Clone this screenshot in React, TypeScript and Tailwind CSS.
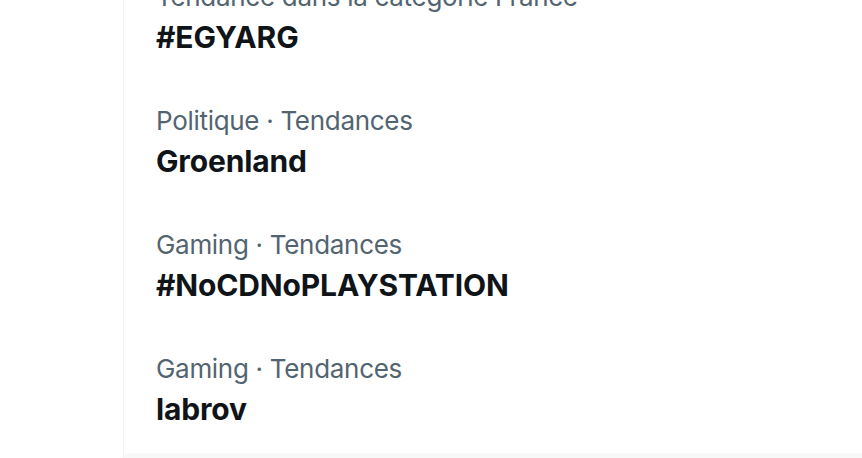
const trends = [
  { context: "Tendance dans la catégorie France", title: "#EGYARG" },
  { context: "Politique · Tendances", title: "Groenland" },
  { context: "Gaming · Tendances", title: "#NoCDNoPLAYSTATION" },
  { context: "Gaming · Tendances", title: "labrov" },
];

const TrendRow = ({ context, title }: { context: string; title: string }) => {
  return (
    <div className="px-8 py-6">
      <div className="text-[26px] leading-[32px] tracking-[-0.3px] text-[#536471]">
        {context}
      </div>
      <div className="mt-1 text-[30px] leading-[40px] tracking-[-0.15px] font-bold text-[#0f1419]">
        {title}
      </div>
    </div>
  );
};

export default function App() {
  return (
    <div
      className="flex w-[862px] h-[458px] overflow-hidden bg-white"
      style={{ fontFamily: "Inter, 'Noto Sans', sans-serif" }}
    >
      <div className="w-[123px] shrink-0" />
      <div className="flex flex-1 flex-col border-l border-[#eff3f4]">
        <div className="-mt-[43px]">
          {trends.map((t, i) => (
            <TrendRow key={i} context={t.context} title={t.title} />
          ))}
        </div>
        <div className="flex-1 bg-[#f7f9f9]" />
      </div>
    </div>
  );
}
